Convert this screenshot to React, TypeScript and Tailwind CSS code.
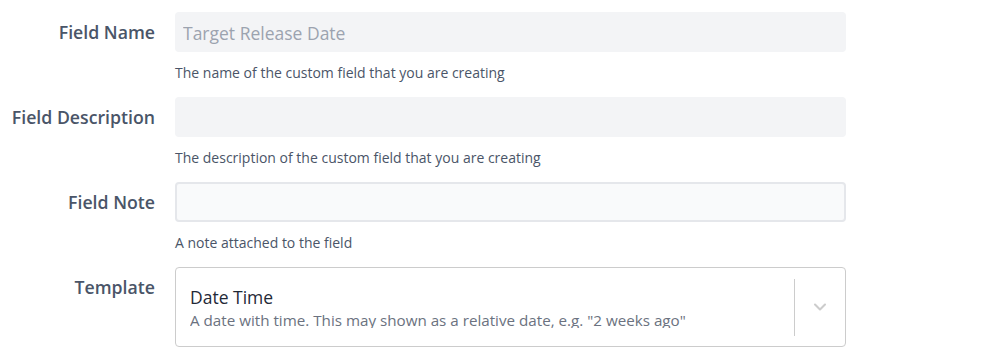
import { ChevronDown } from 'lucide-react';

type FieldProps = {
  label: string;
  help: string;
  children: React.ReactNode;
};

function Field({ label, help, children }: FieldProps) {
  return (
    <div className="flex items-start gap-5 mb-[14px]">
      <label className="w-[155px] h-10 pt-px shrink-0 flex items-center justify-end text-[17.7px] font-semibold text-[#4a5568]">
        {label}
      </label>
      <div className="w-[671px]">
        {children}
        {help && <p className="mt-[11px] h-5 leading-5 text-[14px] text-[#4a5568]">{help}</p>}
      </div>
    </div>
  );
}

export default function App() {
  return (
    <div
      className="min-h-screen bg-white pt-3"
      style={{ fontFamily: '"Open Sans", "Noto Sans", sans-serif' }}
    >
      <Field label="Field Name" help="The name of the custom field that you are creating">
        <input
          className="w-full h-10 rounded bg-[#f3f4f6] px-2 pt-px text-[17.5px] text-[#374151] placeholder:text-[#9ca3af] outline-none"
          placeholder="Target Release Date"
        />
      </Field>

      <Field label="Field Description" help="The description of the custom field that you are creating">
        <input className="w-full h-10 rounded bg-[#f3f4f6] px-2 text-[17px] outline-none" />
      </Field>

      <Field label="Field Note" help="A note attached to the field">
        <input className="w-full h-10 rounded border-2 border-[#e5e7eb] bg-[#f9fafb] px-2 text-[17px] outline-none" />
      </Field>

      <Field label="Template" help="">
        <div className="h-[80px] rounded border border-[#cccccc] bg-white flex">
          <div className="flex-1 pl-[14px] pt-[17px]">
            <div className="h-[43px] overflow-hidden">
              <div className="text-[17.5px] leading-6 text-[#1f2937]">Date Time</div>
              <div className="text-[15.2px] leading-[23px] text-[#6b7280]">
                A date with time. This may shown as a relative date, e.g. "2 weeks ago"
              </div>
            </div>
          </div>
          <div className="flex items-center">
            <div className="w-px h-[57px] bg-[#cccccc]" />
            <div className="w-[50px] flex justify-center">
              <ChevronDown size={20} strokeWidth={2.5} className="text-[#cccccc]" />
            </div>
          </div>
        </div>
      </Field>
    </div>
  );
}
